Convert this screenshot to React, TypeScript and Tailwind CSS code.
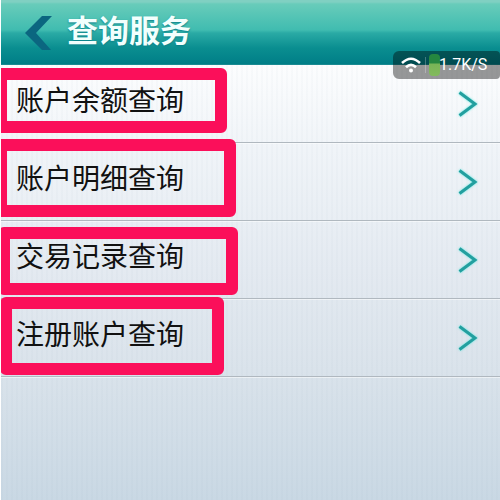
const services = [
  { id: 'balance', name: '账户余额查询', mark: '-left-[6px] top-[3px] h-[65px] w-[232px]' },
  { id: 'detail', name: '账户明细查询', mark: '-left-[6px] -top-[4px] h-[78px] w-[241px]' },
  { id: 'trades', name: '交易记录查询', mark: '-left-[3px] top-[6px] h-[68px] w-[240px]' },
  { id: 'registered', name: '注册账户查询', mark: '-left-px -top-[2px] h-[78px] w-[224px]' },
]

function Header() {
  return (
    <header className="flex h-[65px] items-center bg-[linear-gradient(to_bottom,#80d0c2_0px,#80d0c2_2px,#68ccba_4px,#40bcb0_30px,#2aaaa5_33px,#0a8e90_48px,#007e87_64px,#34969c_65px)] pl-6">
      <button aria-label="返回" className="flex h-9 w-7 items-center">
        <svg viewBox="0 0 28 36" className="h-9 w-7" fill="#0b6680">
          <path d="M17 1H27L11 18L26 35H17L0 18Z" />
        </svg>
      </button>
      <h1 className="pb-2 pl-[14px] text-[31px] leading-9 font-bold text-[#f2fffd] [text-shadow:0_1px_2px_#087f88]">查询服务</h1>
    </header>
  )
}

function NetworkBadge() {
  return (
    <div className="absolute top-[51px] right-0 flex h-7 w-[107px] items-center rounded-l-md rounded-r-sm bg-black/40 pl-2">
      <svg viewBox="0 0 20 17" className="h-[17px] w-5" fill="none" stroke="#fff">
        <path d="M1 6Q10 -2.5 19 6" strokeWidth="2.6" />
        <path d="M5 10.2Q10 5.4 15 10.2" strokeWidth="2.6" />
        <circle cx="10" cy="13.6" r="2" fill="#fff" stroke="none" />
      </svg>
      <span className="ml-1 h-4 w-px bg-white/25" />
      <span className="ml-[3px] h-[22px] w-[11px] rounded-sm bg-[linear-gradient(to_bottom,#258640_0px,#258640_9px,#78b456_10px,#83ba5d_22px)]" />
      <span className="-ml-px font-[Roboto,sans-serif] text-[16px] leading-5 text-white">1.7K/S</span>
    </div>
  )
}

function App() {
  return (
    <div className="min-h-screen bg-white pl-px font-['Noto_Sans_CJK_SC',sans-serif]">
      <div className="relative min-h-screen overflow-hidden bg-[repeating-linear-gradient(to_right,rgba(110,140,160,0.03)_0px,rgba(110,140,160,0.03)_2px,transparent_2px,transparent_5px),linear-gradient(to_bottom,#fcfdfe_65px,#f0f4f8_150px,#e4eaf1_270px,#dae3eb_370px,#c9d8e4_500px)]">
        <Header />
        <nav>
          <ul>
            {services.map((service) => (
              <li key={service.id} className="relative h-[78px] border-b border-[#b0b8bf] shadow-[0_1px_0_rgba(255,255,255,0.5)]">
                <a href={`#${service.id}`} className="flex h-full items-center justify-between pr-[22px] pl-[15px] text-[28px] leading-9 text-[#111]">
                  <span className="pb-[10px]">{service.name}</span>
                  <svg viewBox="0 0 20 26" className="h-[26px] w-5 drop-shadow-[0_0_1px_#5fe8e0]" fill="none" stroke="#239f9f" strokeWidth="3">
                    <path d="M1.5 1.5L17 13L1.5 24.5" />
                  </svg>
                </a>
                <span className={`pointer-events-none absolute rounded-md border-[12px] border-[#fb0f5a] ${service.mark}`} />
              </li>
            ))}
          </ul>
        </nav>
        <NetworkBadge />
      </div>
    </div>
  )
}

export default App
